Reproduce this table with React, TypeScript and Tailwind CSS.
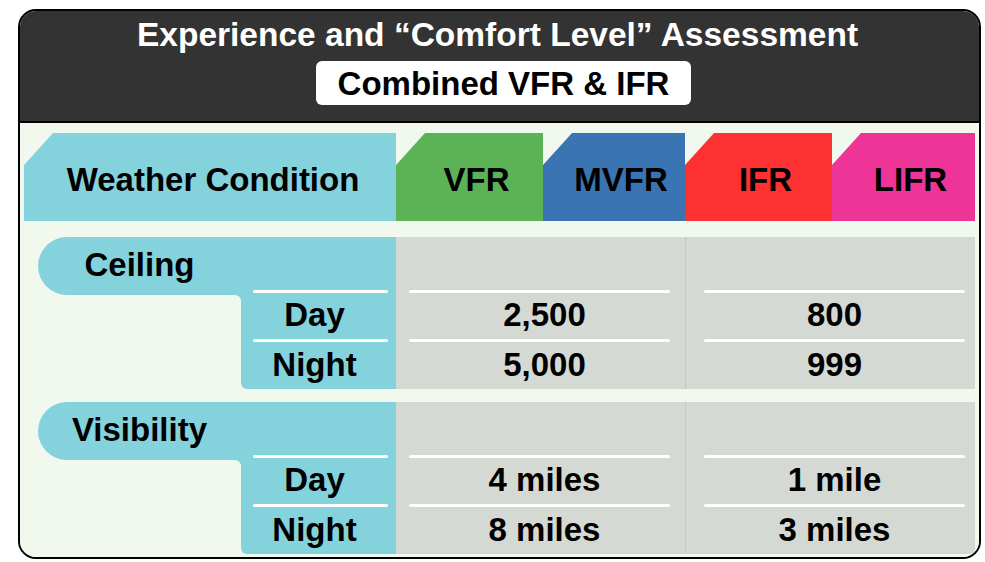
import React from "react";

const CLIP = "[clip-path:polygon(29px_0,100%_0,100%_100%,0_100%,0_32px)]";

function Line({ className }: { className: string }) {
  return <div className={"h-[3px] rounded-full bg-white shrink-0 " + className} />;
}

function ValueCol({ day, night, lineCls }: { day: string; night: string; lineCls: string }) {
  return (
    <div className="w-[289px] flex flex-col">
      <div className="h-[53px] shrink-0" />
      <Line className={lineCls} />
      <div className="h-[46px] shrink-0 flex items-center justify-center pl-[8px] pb-[3px] leading-none">{day}</div>
      <Line className={lineCls} />
      <div className="flex-1 flex items-center justify-center pl-[8px] pb-[3px] leading-none">{night}</div>
    </div>
  );
}

function Section({
  label,
  vfr,
  ifr,
}: {
  label: string;
  vfr: [string, string];
  ifr: [string, string];
}) {
  return (
    <div className="flex h-[152px] pl-[18px] pr-[4px]">
      <div className="relative w-[203px] h-[58px] bg-[#84d2dc] rounded-l-[29px] flex items-center justify-center pb-[3px] leading-none">
        {label}
        <div className="absolute top-full right-0 w-[6px] h-[6px] bg-[#84d2dc]">
          <div className="w-full h-full bg-[#f1f8ee] rounded-tr-[6px]" />
        </div>
      </div>
      <div className="w-[155px] bg-[#84d2dc] rounded-bl-[6px] flex flex-col">
        <div className="h-[53px] shrink-0" />
        <Line className="ml-[12px] mr-[8px]" />
        <div className="h-[46px] shrink-0 flex items-center justify-center pl-[4px] pr-[12px] pb-[3px] leading-none">Day</div>
        <Line className="ml-[12px] mr-[8px]" />
        <div className="flex-1 flex items-center justify-center pl-[4px] pr-[12px] pb-[3px] leading-none">Night</div>
      </div>
      <div className="flex-1 bg-[#d5d9d4] flex">
        <ValueCol day={vfr[0]} night={vfr[1]} lineCls="ml-[13px] mr-[15px]" />
        <div className="w-px bg-[#c2c8c2]" />
        <ValueCol day={ifr[0]} night={ifr[1]} lineCls="ml-[18px] mr-[10px]" />
      </div>
    </div>
  );
}

export default function App() {
  return (
    <div className="w-[985px] h-[562px] bg-white pt-[9px] pl-[18px] font-['Liberation_Sans',Arial,sans-serif] font-bold text-[33px] text-black">
      <div className="w-[963px] h-[550px] border-2 border-black rounded-[18px] overflow-hidden flex flex-col">
        <div className="bg-[#333333] border-b-2 border-black pt-[5px] pb-[16px] flex flex-col items-center">
          <div className="text-white text-[33.5px] leading-[38px] pr-[4px]">Experience and “Comfort Level” Assessment</div>
          <div className="mt-[7px] ml-[8px] h-[44px] bg-white rounded-[6px] px-[22px] flex items-center leading-none">
            Combined VFR &amp; IFR
          </div>
        </div>
        <div className="flex-1 bg-[#f1f8ee] pt-[10px] flex flex-col">
          <div className="flex h-[88px] pl-[4px] pr-[4px]">
            <div className={"w-[372px] bg-[#84d2dc] flex items-center justify-center pl-[6px] pt-[4px] leading-none " + CLIP}>
              Weather Condition
            </div>
            <div className={"w-[147px] bg-[#5cb356] flex items-center justify-center pl-[14px] pt-[4px] leading-none " + CLIP}>
              VFR
            </div>
            <div className={"w-[142px] bg-[#3a74b2] flex items-center justify-center pl-[14px] pt-[4px] leading-none " + CLIP}>
              MVFR
            </div>
            <div className={"w-[147px] bg-[#fd3131] flex items-center justify-center pl-[14px] pt-[4px] leading-none " + CLIP}>
              IFR
            </div>
            <div className={"w-[143px] bg-[#ee3597] flex items-center justify-center pl-[14px] pt-[4px] leading-none " + CLIP}>
              LIFR
            </div>
          </div>
          <div className="h-[16px]" />
          <Section label="Ceiling" vfr={["2,500", "5,000"]} ifr={["800", "999"]} />
          <div className="h-[13px]" />
          <Section label="Visibility" vfr={["4 miles", "8 miles"]} ifr={["1 mile", "3 miles"]} />
        </div>
      </div>
    </div>
  );
}
